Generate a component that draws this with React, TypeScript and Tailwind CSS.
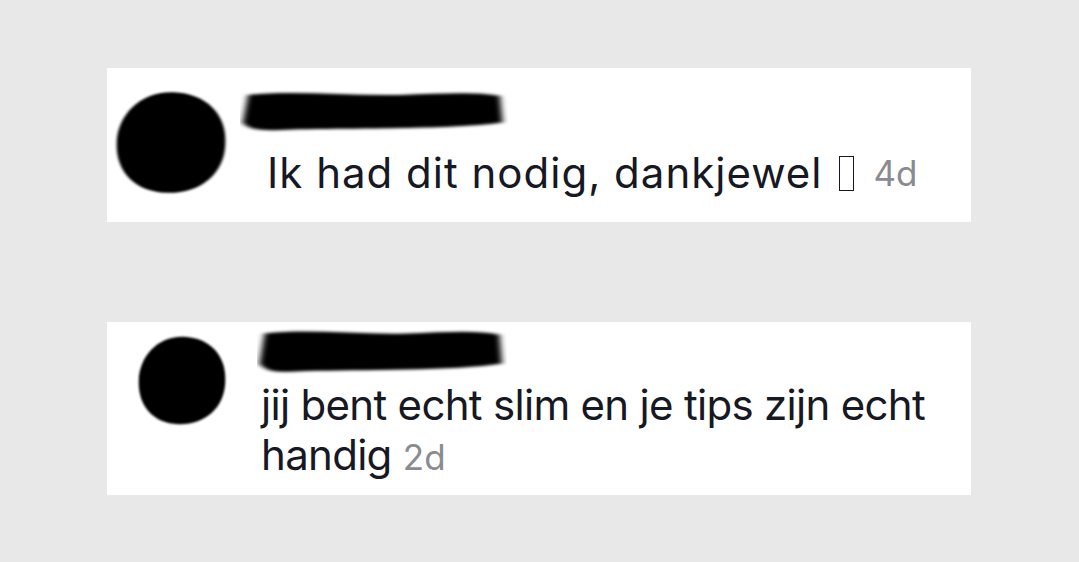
import React from "react";

function Blob({ w, h }: { w: number; h: number }) {
  return (
    <svg width={w} height={h} viewBox="0 0 100 100" preserveAspectRatio="none">
      <defs>
        <filter id="smudge" x="-10%" y="-10%" width="120%" height="120%">
          <feGaussianBlur stdDeviation="1.2" />
        </filter>
      </defs>
      <path
        d="M52 3 C80 4 98 24 96 52 C95 80 74 98 46 97 C20 96 3 78 4 50 C5 24 24 2 52 3 Z"
        fill="#050505"
        filter="url(#smudge)"
      />
    </svg>
  );
}

function Bar({ w, h }: { w: number; h: number }) {
  return (
    <svg width={w} height={h} viewBox="0 0 100 40" preserveAspectRatio="none">
      <path
        d="M3 6 C20 2 40 7 60 6 C75 5 88 3 97 7 L98 30 C80 36 40 35 20 36 C10 37 4 38 1 30 Z"
        fill="#050505"
        filter="url(#smudge)"
      />
    </svg>
  );
}

export default function App() {
  return (
    <div
      className="w-[1079px] h-[562px] bg-[#e8e8e8] pt-[68px] pl-[107px] flex flex-col gap-[100px]"
      style={{ fontFamily: "Inter, 'Liberation Sans', sans-serif" }}
    >
      <div className="w-[864px] h-[154px] bg-white flex">
        <div className="pl-[5px] pt-[21px]">
          <Blob w={118} h={107} />
        </div>
        <div className="flex flex-col pl-[10px] pt-[20px]">
          <Bar w={268} h={46} />
          <div className="pl-[27px] mt-[14px] text-[42px] leading-[50px] text-[#161823] flex items-center">
            <span className="tracking-[1px]">Ik had dit nodig, dankjewel</span>
            <span className="inline-block w-[15px] h-[35px] border-[1.5px] border-[#161823] ml-[17px]" />
            <span className="text-[35px] text-[#8a8b91] ml-[19px]">4d</span>
          </div>
        </div>
      </div>

      <div className="w-[864px] h-[173px] bg-white flex">
        <div className="pl-[28px] pt-[12px]">
          <Blob w={94} h={93} />
        </div>
        <div className="flex flex-col pl-[28px] pt-[4px]">
          <Bar w={250} h={50} />
          <div className="pl-[4px] mt-[4px] w-[700px] text-[42px] leading-[50px] tracking-[-0.7px] text-[#161823]">
            jij bent echt slim en je tips zijn echt handig{" "}
            <span className="text-[35px] leading-none tracking-normal text-[#8a8b91]">2d</span>
          </div>
        </div>
      </div>
    </div>
  );
}
